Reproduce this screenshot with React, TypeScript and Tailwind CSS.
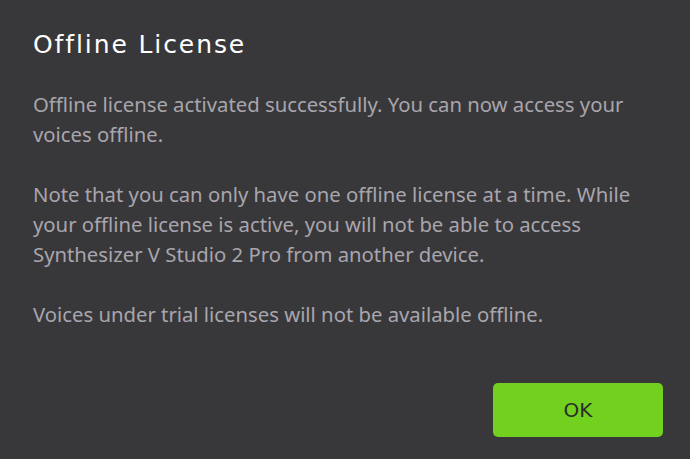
export default function App() {
  return (
    <div className="flex h-[459px] w-[690px] flex-col bg-[#38383a] pl-[33px] pr-[27px] pt-[31px] pb-[22px]">
      <h1 className="font-['DejaVu_Sans',sans-serif] text-[25px] leading-[28px] tracking-[1.9px] text-white">
        Offline License
      </h1>

      <div className="mt-[30px] font-['Noto_Sans',sans-serif] text-[20.3px] leading-[30px] text-[#a9a5ad]">
        <p>
          Offline license activated successfully. You can now access your
          voices offline.
        </p>
        <p className="mt-[30px] pr-[30px]">
          Note that you can only have one offline license at a time. While
          your offline license is active, you will not be able to access
          Synthesizer V Studio 2 Pro from another device.
        </p>
        <p className="mt-[30px]">
          Voices under trial licenses will not be available offline.
        </p>
      </div>

      <div className="mt-auto flex justify-end">
        <button className="h-[54px] w-[170px] rounded-[5px] bg-[#72d11f] font-['DejaVu_Sans',sans-serif] text-[20px] text-[#2b2b2b]">
          OK
        </button>
      </div>
    </div>
  );
}
